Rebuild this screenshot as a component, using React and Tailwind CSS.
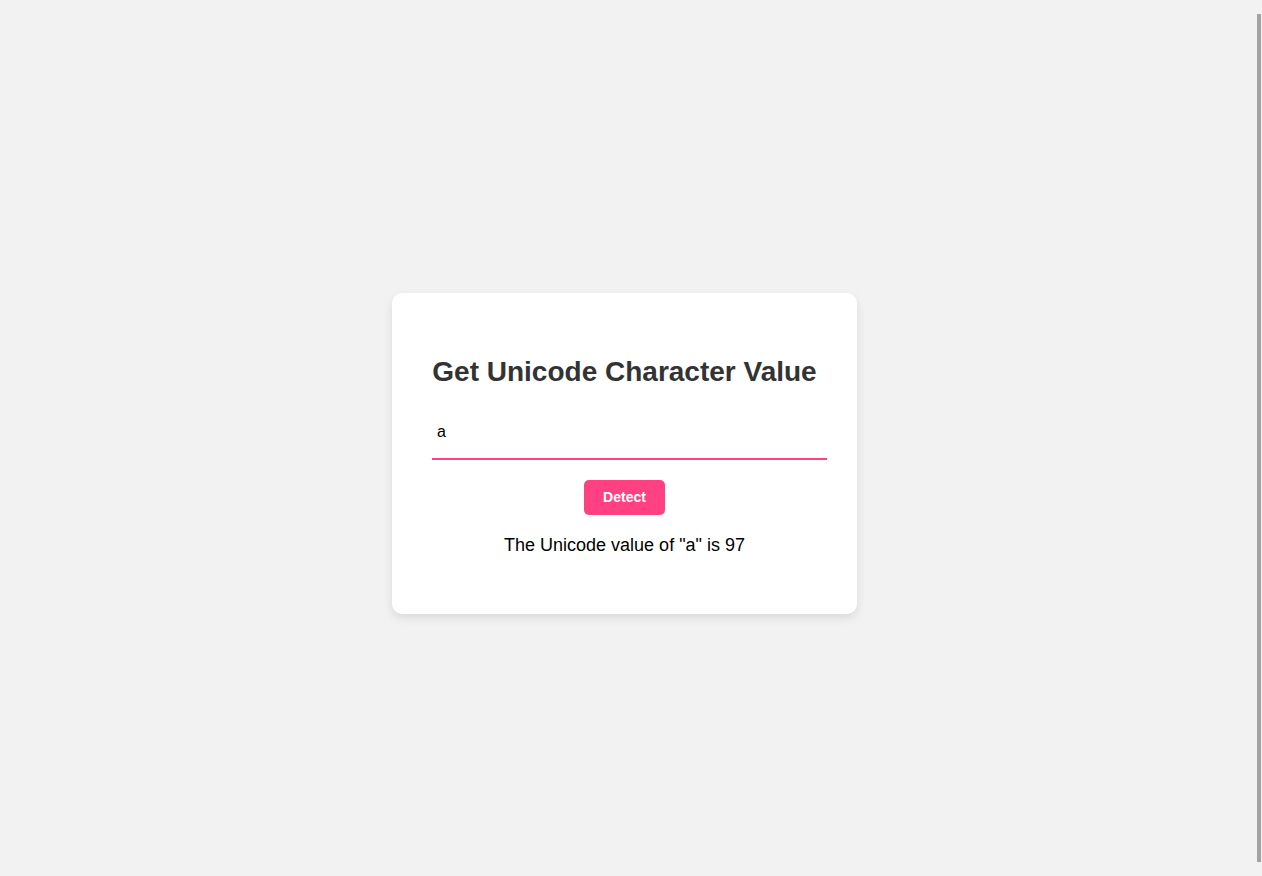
import React, { useState } from "react";

export default function App() {
  const [value, setValue] = useState("a");
  const [result, setResult] = useState('The Unicode value of "a" is 97');

  const detect = () => {
    if (value.length > 0) {
      setResult(`The Unicode value of "${value[0]}" is ${value.codePointAt(0)}`);
    }
  };

  return (
    <div
      className="relative w-full h-[876px] overflow-hidden bg-[#f2f2f2] flex items-center justify-center pt-[31px] pr-[13px]"
      style={{ fontFamily: '"Liberation Sans", Arial, sans-serif' }}
    >
      <div className="w-[465px] h-[321px] bg-white rounded-[10px] shadow-[0_4px_10px_rgba(0,0,0,0.1)] px-[40px] pt-[40px] flex flex-col items-center">
        <h2 className="mt-[23px] text-[28px] leading-[32px] font-bold text-[#333333] text-center whitespace-nowrap">
          Get Unicode Character Value
        </h2>
        <input
          value={value}
          onChange={(e) => setValue(e.target.value)}
          className="mt-[31px] self-start w-[395px] h-[41px] px-[5px] pt-0 pb-[14px] text-[16px] text-black bg-transparent border-b-2 border-[#ff4081] outline-none"
          style={{ fontFamily: '"Liberation Sans", Arial, sans-serif' }}
        />
        <button
          onClick={detect}
          className="mt-[20px] w-[81px] h-[35px] rounded-[5px] bg-[#ff4081] text-white text-[14px] font-bold"
          style={{ fontFamily: '"Liberation Sans", Arial, sans-serif' }}
        >
          Detect
        </button>
        <p className="mt-[20px] text-[18px] leading-[21px] text-black text-center">
          {result}
        </p>
      </div>
      <div className="absolute right-[1px] top-[14px] bottom-[14px] w-[4px] bg-[#a3a3a3]" />
    </div>
  );
}
